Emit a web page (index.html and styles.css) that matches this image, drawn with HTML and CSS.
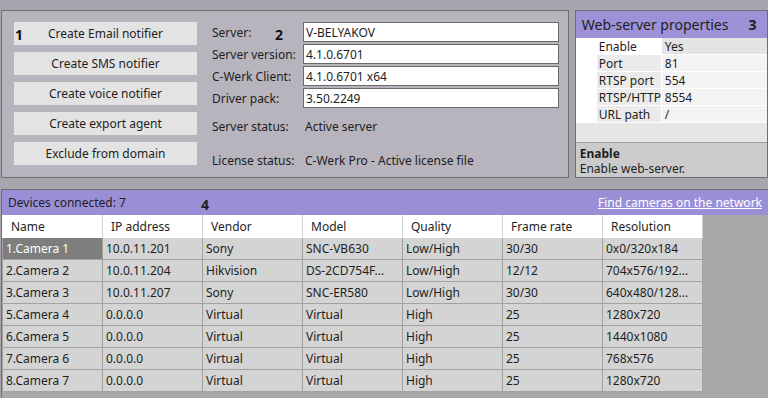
FILE: index.html
```html
<!DOCTYPE html>
<html lang="en">

<head>
  <meta charset="UTF-8">
  <title>Server settings</title>
  <link rel="stylesheet" href="styles.css">
</head>

<body>
  <div class="top">
    <div class="panel main-panel">
      <span class="mark mark-1">1</span>
      <span class="mark mark-2">2</span>
      <div class="actions">
        <button>Create Email notifier</button>
        <button>Create SMS notifier</button>
        <button>Create voice notifier</button>
        <button>Create export agent</button>
        <button>Exclude from domain</button>
      </div>
      <div class="info">
        <div class="fields">
          <label>Server:</label><input type="text" value="V-BELYAKOV">
          <label>Server version:</label><input type="text" value="4.1.0.6701">
          <label>C-Werk Client:</label><input type="text" value="4.1.0.6701 x64">
          <label>Driver pack:</label><input type="text" value="3.50.2249">
        </div>
        <div class="status">
          <div class="status-row"><span class="status-label">Server status:</span><span>Active server</span></div>
          <div class="status-row"><span class="status-label">License status:</span><span>C-Werk Pro - Active license file</span></div>
        </div>
      </div>
    </div>

    <div class="panel web-panel">
      <div class="web-title">Web-server properties <b class="mark-3">3</b></div>
      <div class="props">
        <div class="prop selected"><span class="pname">Enable</span><span class="pval">Yes</span></div>
        <div class="prop"><span class="pname">Port</span><span class="pval">81</span></div>
        <div class="prop"><span class="pname">RTSP port</span><span class="pval">554</span></div>
        <div class="prop"><span class="pname">RTSP/HTTP port</span><span class="pval">8554</span></div>
        <div class="prop"><span class="pname">URL path</span><span class="pval">/</span></div>
      </div>
      <div class="props-empty"></div>
      <div class="desc">
        <b>Enable</b>
        <div>Enable web-server.</div>
      </div>
    </div>
  </div>

  <div class="devices">
    <div class="devices-head">
      <span>Devices connected: 7</span>
      <b class="mark-4">4</b>
      <a href="#" class="find">Find cameras on the network</a>
    </div>
    <table class="cams">
      <thead>
        <tr><th>Name</th><th>IP address</th><th>Vendor</th><th>Model</th><th>Quality</th><th>Frame rate</th><th>Resolution</th></tr>
      </thead>
      <tbody>
        <tr><td class="sel">1.Camera 1</td><td>10.0.11.201</td><td>Sony</td><td>SNC-VB630</td><td>Low/High</td><td>30/30</td><td>0x0/320x184</td></tr>
        <tr><td>2.Camera 2</td><td>10.0.11.204</td><td>Hikvision</td><td>DS-2CD754F...</td><td>Low/High</td><td>12/12</td><td>704x576/192...</td></tr>
        <tr><td>3.Camera 3</td><td>10.0.11.207</td><td>Sony</td><td>SNC-ER580</td><td>Low/High</td><td>30/30</td><td>640x480/128...</td></tr>
        <tr><td>5.Camera 4</td><td>0.0.0.0</td><td>Virtual</td><td>Virtual</td><td>High</td><td>25</td><td>1280x720</td></tr>
        <tr><td>6.Camera 5</td><td>0.0.0.0</td><td>Virtual</td><td>Virtual</td><td>High</td><td>25</td><td>1440x1080</td></tr>
        <tr><td>7.Camera 6</td><td>0.0.0.0</td><td>Virtual</td><td>Virtual</td><td>High</td><td>25</td><td>768x576</td></tr>
        <tr><td>8.Camera 7</td><td>0.0.0.0</td><td>Virtual</td><td>Virtual</td><td>High</td><td>25</td><td>1280x720</td></tr>
      </tbody>
    </table>
  </div>
</body>

</html>
```

FILE: styles.css
```css
body {
  margin: 0;
  width: 768px;
  height: 398px;
  overflow: hidden;
  background-color: #a9a5ae;
  font-family: 'Noto Sans', 'DejaVu Sans', sans-serif;
  font-size: 12px;
  color: #1e1e1e;
}

.top {
  display: flex;
  gap: 6px;
  padding: 10px 0 0 1px;
  height: 168px;
}

.panel {
  border: 1px solid #6f6c74;
  box-sizing: border-box;
}

/* Left panel: actions and server info */
.main-panel {
  position: relative;
  width: 570px;
  height: 168px;
  background-color: #b8b4bd;
  display: flex;
  padding: 11px 0 0 12px;
}

.mark {
  position: absolute;
  font-weight: bold;
  font-size: 14px;
  color: #111;
}

.mark-1 {
  left: 13px;
  top: 14px;
}

.mark-2 {
  left: 273px;
  top: 14px;
}

.actions {
  display: flex;
  flex-direction: column;
  gap: 7px;
  width: 183px;
}

.actions button {
  height: 23px;
  border: none;
  background-color: #e3e3e3;
  font-family: inherit;
  font-size: 12px;
  color: #1e1e1e;
  padding: 0;
}

.info {
  margin-left: 15px;
  width: 347px;
}

.fields {
  display: grid;
  grid-template-columns: 91px 256px;
  grid-auto-rows: 20px;
  row-gap: 2px;
  align-items: center;
}

.fields input {
  height: 20px;
  box-sizing: border-box;
  border: 1px solid #6a6a6a;
  background: #fff;
  font-family: inherit;
  font-size: 12px;
  color: #1e1e1e;
  padding: 0 2px;
  margin: 0;
}

.status {
  margin-top: 1px;
}

.status-row {
  display: flex;
  height: 34px;
  align-items: center;
}

.status-label {
  width: 93px;
}

/* Right panel: web server properties */
.web-panel {
  width: 194px;
  height: 168px;
  display: flex;
  flex-direction: column;
  background-color: #cbcbcb;
}

.web-title {
  height: 27px;
  background-color: #9d91d7;
  font-size: 14px;
  display: flex;
  align-items: center;
  padding-left: 6px;
  gap: 20px;
}

.mark-3 {
  font-size: 14px;
}

.props {
  background-color: #fff;
  padding-left: 21px;
}

.prop {
  display: flex;
  height: 16px;
  align-items: center;
  border-bottom: 1px solid #fff;
}

.pname {
  width: 65px;
  flex-shrink: 0;
  padding-left: 2px;
  height: 100%;
  background-color: #ebebeb;
  white-space: nowrap;
  overflow: hidden;
  border-right: 1px solid #fff;
  box-sizing: border-box;
}

.pval {
  flex: 1;
  padding-left: 3px;
  height: 100%;
  background-color: #f3f3f3;
}

.prop.selected .pname {
  background-color: #fff;
}

.prop.selected .pval {
  background-color: #e4e4e4;
}

.props-empty {
  height: 19px;
  background-color: #e6e6e6;
  border-bottom: 1px solid #9a9a9a;
}

.desc {
  flex: 1;
  padding: 3px 4px 0;
  line-height: 15px;
}

/* Bottom panel: devices list */
.devices {
  margin: 11px 0 0 1px;
  height: 220px;
  border-left: 1px solid #6f6c74;
  border-top: 1px solid #6f6c74;
  background-color: #a8a8a8;
}

.devices-head {
  position: relative;
  height: 25px;
  background-color: #9a8fd6;
  display: flex;
  align-items: center;
  padding: 0 6px;
}

.mark-4 {
  position: absolute;
  left: 199px;
  top: 5px;
  font-size: 14px;
}

.find {
  margin-left: auto;
  color: #fff;
}

.cams {
  border-collapse: collapse;
  table-layout: fixed;
}

.cams th,
.cams td {
  width: 100px;
  height: 22px;
  border: 1px solid #a2a2a2;
  padding: 0 0 0 3px;
  text-align: left;
  font-weight: normal;
  white-space: nowrap;
  box-sizing: border-box;
}

.cams th {
  background-color: #fff;
  border-color: #fff #d0d0d0 #fff #fff;
  padding-left: 8px;
}

.cams td {
  background-color: #d4d4d4;
}

.cams td.sel {
  background-color: #7e7e7e;
  color: #fff;
}
```
